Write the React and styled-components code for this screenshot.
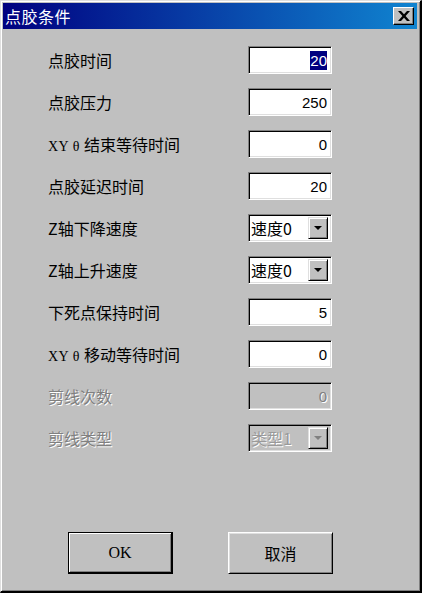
import React from 'react';
import styled, { createGlobalStyle } from 'styled-components';

const GlobalStyle = createGlobalStyle`
    html, body {
        margin: 0;
        padding: 0;
        background: #c0c0c0;
    }
    body {
        font-family: "Noto Sans CJK SC", "Liberation Sans", sans-serif;
    }
`;

const rows = [
    { label: '点胶时间', value: '20', selected: true },
    { label: '点胶压力', value: '250' },
    { label: '结束等待时间', xy: true, value: '0' },
    { label: '点胶延迟时间', value: '20' },
    { label: 'Z轴下降速度', combo: '速度0' },
    { label: 'Z轴上升速度', combo: '速度0' },
    { label: '下死点保持时间', value: '5' },
    { label: '移动等待时间', xy: true, value: '0' },
    { label: '剪线次数', value: '0', disabled: true },
    { label: '剪线类型', combo: '类型1', disabled: true },
];

const App = () => {
    return(
        <>
            <GlobalStyle />
            <Window>
                <TitleBar>
                    <Title>点胶条件</Title>
                    <CloseButton>
                        <svg width="12" height="10" viewBox="0 0 12 10">
                            <path d="M0 0h3l3 3.3L9 0h3L7.6 5 12 10H9L6 6.7 3 10H0l4.4-5z" fill="#000" />
                        </svg>
                    </CloseButton>
                </TitleBar>
                <Body>
                    <Form>
                        {rows.map((row) => (
                            <Row key={row.label}>
                                <Label disabled={row.disabled}>
                                    {row.xy && <Latin>XY θ </Latin>}
                                    {row.label}
                                </Label>
                                {row.combo ? (
                                    <Combo disabled={row.disabled}>
                                        <ComboText disabled={row.disabled}>{row.combo}</ComboText>
                                        <ArrowButton>
                                            <Arrow disabled={row.disabled} />
                                        </ArrowButton>
                                    </Combo>
                                ) : (
                                    <Field disabled={row.disabled}>
                                        {row.selected ? <Selected>{row.value}</Selected> : row.value}
                                    </Field>
                                )}
                            </Row>
                        ))}
                    </Form>
                    <ButtonRow>
                        <Button isDefault>
                            <ButtonLatin>OK</ButtonLatin>
                        </Button>
                        <Button>取消</Button>
                    </ButtonRow>
                </Body>
            </Window>
        </>
    );
};

const Window = styled.div`
    width: 422px;
    height: 593px;
    box-sizing: border-box;
    display: flex;
    flex-direction: column;
    background: #c0c0c0;
    border-top: 1px solid #dfdfdf;
    border-left: 1px solid #dfdfdf;
    border-right: 2px solid #000;
    border-bottom: 2px solid #000;
    box-shadow: inset 1px 1px 0 #fff, inset -1px -1px 0 #808080;
    padding: 2px 3px 3px 2px;
`;

const TitleBar = styled.div`
    height: 26px;
    display: flex;
    align-items: center;
    justify-content: space-between;
    padding: 0 3px 0 2px;
    background: linear-gradient(to right, #000080, #1084d0);
`;

const Title = styled.div`
    color: #fff;
    font-size: 16px;
    line-height: 20px;
    letter-spacing: 0.5px;
`;

const CloseButton = styled.div`
    width: 21px;
    height: 18px;
    box-sizing: border-box;
    display: flex;
    align-items: center;
    justify-content: center;
    background: #c0c0c0;
    border-top: 1px solid #fff;
    border-left: 1px solid #fff;
    border-right: 1px solid #000;
    border-bottom: 1px solid #000;
    box-shadow: inset -1px -1px 0 #808080;
`;

const Body = styled.div`
    flex: 1;
    display: flex;
    flex-direction: column;
    padding: 17px 0 14px 45px;
`;

const Form = styled.div`
    display: grid;
    row-gap: 14px;
`;

const Row = styled.div`
    display: grid;
    grid-template-columns: 200px 84px;
    align-items: center;
    height: 28px;
`;

const Label = styled.div`
    font-size: 16px;
    color: ${(p) => (p.disabled ? '#808080' : '#000')};
    text-shadow: ${(p) => (p.disabled ? '1px 1px 0 #fff' : 'none')};
    white-space: nowrap;
`;

const Latin = styled.span`
    font-family: "Liberation Serif", serif;
    font-size: 14px;
    letter-spacing: 0.5px;
`;

const ButtonLatin = styled.span`
    font-family: "Liberation Serif", serif;
    font-size: 16px;
`;

const sunken = `
    box-sizing: border-box;
    height: 28px;
    border-top: 1px solid #808080;
    border-left: 1px solid #808080;
    border-right: 1px solid #fff;
    border-bottom: 1px solid #fff;
    box-shadow: inset 1px 1px 0 #000, inset -1px -1px 0 #dfdfdf;
`;

const Field = styled.div`
    ${sunken}
    display: flex;
    align-items: center;
    justify-content: flex-end;
    padding: 0 4px;
    font-family: "Liberation Sans", sans-serif;
    font-size: 15px;
    background: ${(p) => (p.disabled ? '#c0c0c0' : '#fff')};
    color: ${(p) => (p.disabled ? '#808080' : '#000')};
    text-shadow: ${(p) => (p.disabled ? '1px 1px 0 #fff' : 'none')};
`;

const Selected = styled.span`
    background: #000080;
    color: #fff;
    padding: 1px 0;
`;

const Combo = styled.div`
    ${sunken}
    display: flex;
    align-items: center;
    justify-content: space-between;
    padding: 2px 3px 2px 2px;
    background: ${(p) => (p.disabled ? '#c0c0c0' : '#fff')};
`;

const ComboText = styled.span`
    font-size: 16px;
    color: ${(p) => (p.disabled ? '#9a9a9a' : '#000')};
    text-shadow: ${(p) => (p.disabled ? '1px 1px 0 #fff' : 'none')};
`;

const ArrowButton = styled.div`
    width: 20px;
    height: 22px;
    box-sizing: border-box;
    display: flex;
    align-items: center;
    justify-content: center;
    background: #c0c0c0;
    border-top: 1px solid #dfdfdf;
    border-left: 1px solid #dfdfdf;
    border-right: 1px solid #000;
    border-bottom: 1px solid #000;
    box-shadow: inset 1px 1px 0 #fff, inset -1px -1px 0 #808080;
`;

const Arrow = styled.div`
    width: 0;
    height: 0;
    border-left: 4px solid transparent;
    border-right: 4px solid transparent;
    border-top: 4px solid ${(p) => (p.disabled ? '#808080' : '#000')};
`;

const ButtonRow = styled.div`
    margin-top: auto;
    margin-left: 20px;
    display: flex;
    gap: 55px;
`;

const Button = styled.div`
    width: 105px;
    height: 42px;
    box-sizing: border-box;
    display: flex;
    align-items: center;
    justify-content: center;
    font-size: 16px;
    color: #000;
    background: #c0c0c0;
    border-top: 1px solid ${(p) => (p.isDefault ? '#000' : '#fff')};
    border-left: 1px solid ${(p) => (p.isDefault ? '#000' : '#fff')};
    border-right: ${(p) => (p.isDefault ? '2px' : '1px')} solid #000;
    border-bottom: ${(p) => (p.isDefault ? '2px' : '1px')} solid #000;
    box-shadow: ${(p) => (p.isDefault
        ? 'inset 1px 1px 0 #fff, inset -1px -1px 0 #808080'
        : 'inset 1px 1px 0 #dfdfdf, inset -1px -1px 0 #808080')};
`;

export default App;
